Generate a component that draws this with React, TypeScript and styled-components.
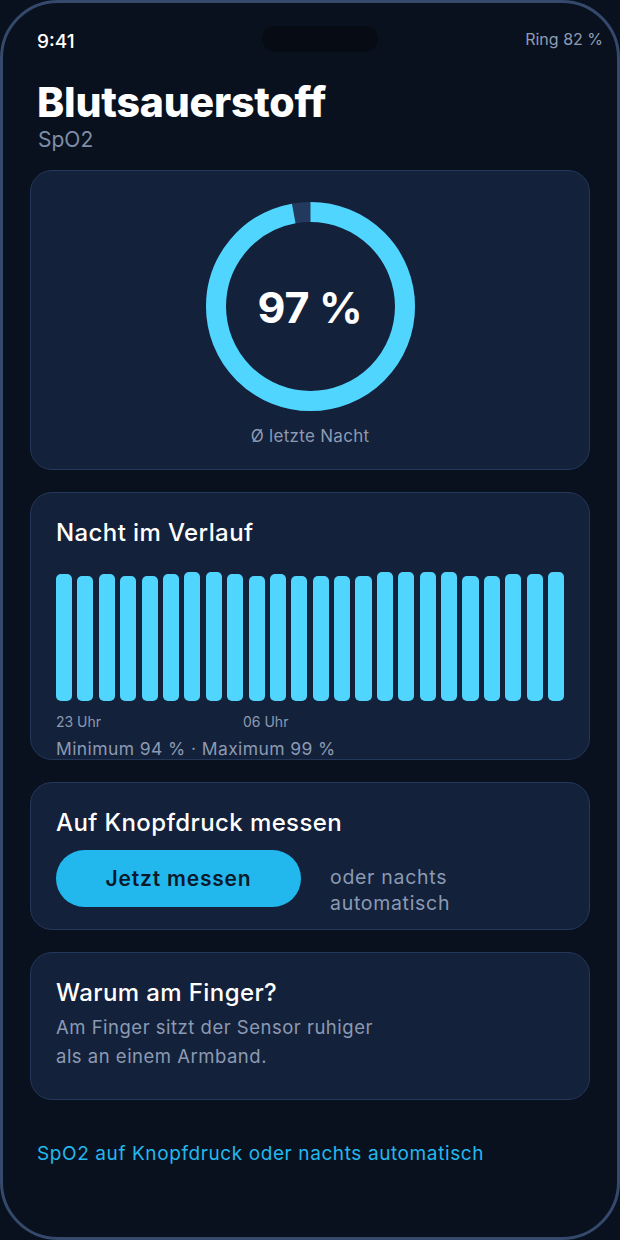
import styled, { createGlobalStyle } from 'styled-components'

const GlobalStyle = createGlobalStyle`
  html, body {
    margin: 0;
    padding: 0;
    background: #0a111e;
  }
  * {
    box-sizing: border-box;
  }
`

const nightValues = [
  97, 96, 97, 96, 96, 97, 98, 98, 97, 96, 97, 96,
  96, 96, 96, 98, 98, 98, 98, 96, 96, 97, 97, 98,
]

function barHeight(value: number) {
  return 125 + (value - 96) * 2
}

export default function App() {
  const percent = 97
  const radius = 94.5
  const circumference = 2 * Math.PI * radius

  return (
    <>
      <GlobalStyle />
      <Phone>
        <StatusBar>
          <Time>9:41</Time>
          <Notch />
          <Battery>Ring 82 %</Battery>
        </StatusBar>

        <Header>
          <Title>Blutsauerstoff</Title>
          <Subtitle>SpO2</Subtitle>
        </Header>

        <Cards>
          <RingCard $height={300}>
            <RingWrap>
              <svg width="209" height="209" viewBox="0 0 209 209">
                <circle
                  cx="104.5"
                  cy="104.5"
                  r={radius}
                  fill="none"
                  stroke="#233a5e"
                  strokeWidth="20"
                />
                <circle
                  cx="104.5"
                  cy="104.5"
                  r={radius}
                  fill="none"
                  stroke="#50d6fe"
                  strokeWidth="20"
                  strokeDasharray={`${(circumference * percent) / 100} ${circumference}`}
                  transform="rotate(-90 104.5 104.5)"
                />
              </svg>
              <RingValue>{percent} %</RingValue>
            </RingWrap>
            <RingLabel>Ø letzte Nacht</RingLabel>
          </RingCard>

          <Card $height={268}>
            <CardTitle>Nacht im Verlauf</CardTitle>
            <Bars>
              {nightValues.map((v, i) => (
                <Bar key={i} style={{ height: barHeight(v) }} />
              ))}
            </Bars>
            <AxisLabels>
              <AxisLabel>23 Uhr</AxisLabel>
              <AxisLabel>06 Uhr</AxisLabel>
            </AxisLabels>
            <Stats>Minimum 94 % · Maximum 99 %</Stats>
          </Card>

          <Card $height={148}>
            <CardTitle>Auf Knopfdruck messen</CardTitle>
            <MeasureRow>
              <MeasureButton>Jetzt messen</MeasureButton>
              <MutedText>
                oder nachts
                <br />
                automatisch
              </MutedText>
            </MeasureRow>
          </Card>

          <Card $height={148}>
            <CardTitle>Warum am Finger?</CardTitle>
            <BodyText>
              Am Finger sitzt der Sensor ruhiger als an einem Armband.
            </BodyText>
          </Card>
        </Cards>

        <Footer>SpO2 auf Knopfdruck oder nachts automatisch</Footer>
      </Phone>
    </>
  )
}

const font = `Inter, "Noto Sans", sans-serif`

const Phone = styled.div`
  width: 620px;
  height: 1240px;
  border: 3px solid #34496b;
  border-radius: 58px;
  background: #0a111e;
  overflow: hidden;
  font-family: ${font};
  color: #ffffff;
  display: flex;
  flex-direction: column;
`

const StatusBar = styled.div`
  display: grid;
  grid-template-columns: 1fr auto 1fr;
  align-items: center;
  padding: 22px 14px 0 34px;
`

const Time = styled.span`
  font-size: 19px;
  font-weight: 500;
  padding-top: 5px;
`

const Notch = styled.div`
  width: 116px;
  height: 26px;
  border-radius: 13px;
  background: #070b13;
`

const Battery = styled.span`
  justify-self: end;
  font-size: 16px;
  color: #8d9db5;
`

const Header = styled.div`
  padding: 24px 34px 0;
`

const Title = styled.h1`
  margin: 0;
  font-size: 41px;
  line-height: 50px;
  font-weight: 800;
  letter-spacing: -0.2px;
`

const Subtitle = styled.div`
  font-size: 21px;
  line-height: 26px;
  color: #7e8ea8;
  padding-left: 1px;
`

const Cards = styled.div`
  display: flex;
  flex-direction: column;
  gap: 22px;
  padding: 17px 27px 0;
`

const Card = styled.section<{ $height: number }>`
  height: ${(p) => p.$height}px;
  overflow: hidden;
  background: #14213a;
  border: 1px solid #24385a;
  border-radius: 22px;
  padding: 25px 25px 0;
`

const RingCard = styled(Card)`
  padding-top: 31px;
  display: flex;
  flex-direction: column;
  align-items: center;
`

const RingWrap = styled.div`
  position: relative;
  width: 209px;
  height: 209px;

  svg {
    display: block;
  }
`

const RingValue = styled.div`
  position: absolute;
  inset: 0;
  display: flex;
  align-items: center;
  justify-content: center;
  font-size: 43px;
  font-weight: 700;
  letter-spacing: -0.3px;
`

const RingLabel = styled.div`
  margin-top: 15px;
  font-size: 17px;
  letter-spacing: 0.3px;
  color: #8b9ab3;
`

const CardTitle = styled.h2`
  margin: 0;
  font-size: 24px;
  line-height: 30px;
  font-weight: 500;
  letter-spacing: 0.4px;
`

const Bars = styled.div`
  display: flex;
  align-items: flex-end;
  gap: 5.3px;
  height: 131px;
  margin-top: 22px;
`

const Bar = styled.div`
  flex: 1;
  background: #50d6fe;
  border-radius: 5px;
`

const AxisLabels = styled.div`
  display: grid;
  grid-template-columns: 187px 1fr;
  margin-top: 12px;
`

const AxisLabel = styled.span`
  font-size: 14px;
  line-height: 18px;
  color: #8b9ab3;
`

const Stats = styled.div`
  margin-top: 9px;
  font-size: 17.5px;
  line-height: 18px;
  letter-spacing: 0.4px;
  color: #8b9ab3;
`

const MeasureRow = styled.div`
  display: flex;
  align-items: flex-start;
  gap: 29px;
  margin-top: 12px;
`

const MeasureButton = styled.button`
  flex: none;
  width: 245px;
  height: 57px;
  border: none;
  border-radius: 29px;
  background: #22b8ee;
  color: #0b1a2a;
  font-family: ${font};
  font-size: 21px;
  font-weight: 600;
  letter-spacing: 0.8px;
  cursor: pointer;
`

const MutedText = styled.p`
  margin: 14px 0 0;
  font-size: 19.5px;
  line-height: 26px;
  letter-spacing: 0.7px;
  color: #8b9ab3;
`

const BodyText = styled.p`
  margin: 5px 0 0;
  max-width: 330px;
  font-size: 18.5px;
  line-height: 29px;
  letter-spacing: 0.5px;
  color: #8b9ab3;
`

const Footer = styled.div`
  padding: 42px 34px 0;
  font-size: 19px;
  letter-spacing: 0.6px;
  color: #22b8ee;
`
